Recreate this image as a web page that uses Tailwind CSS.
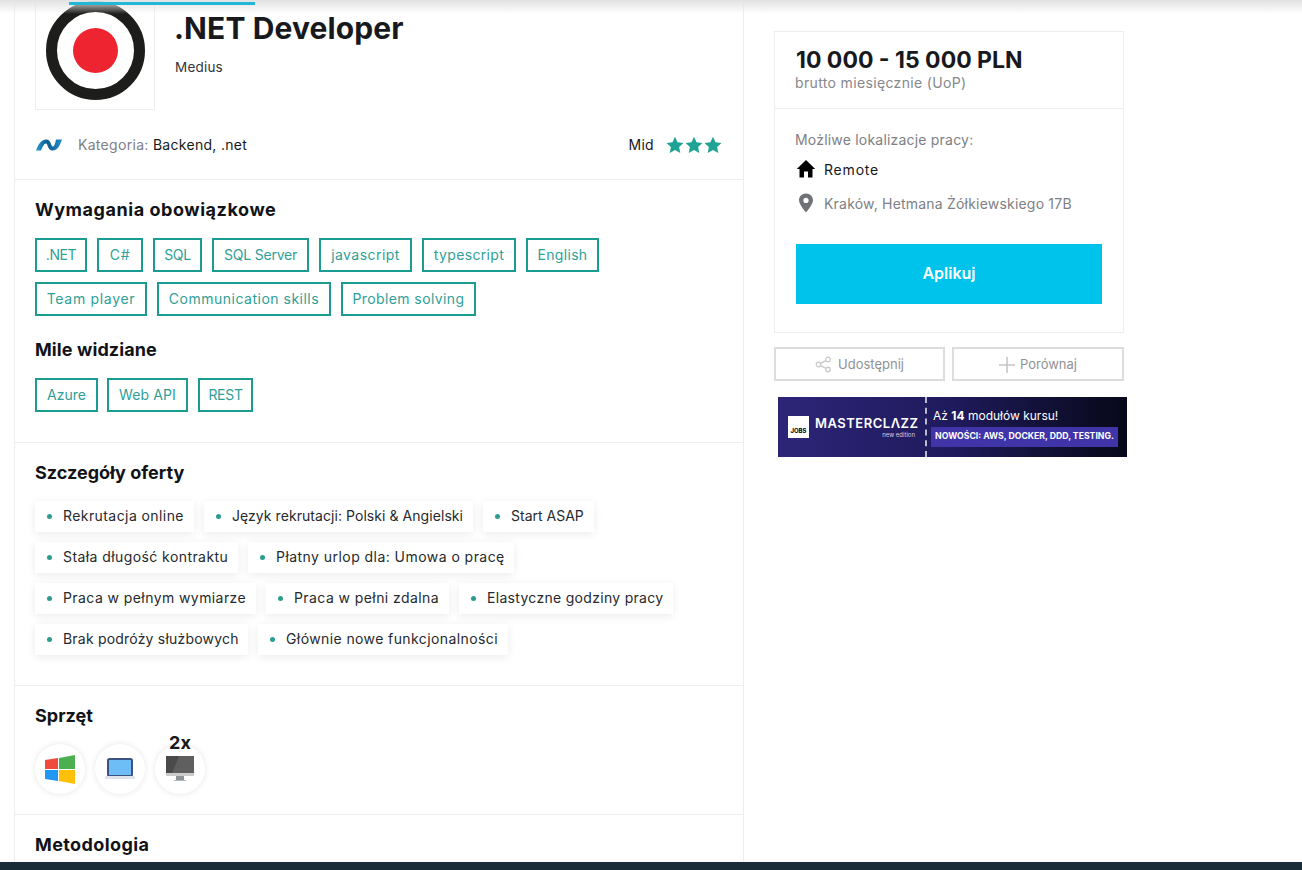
<!DOCTYPE html>
<html lang="pl">
<head>
  <meta charset="UTF-8">
  <title>.NET Developer</title>
  <script src="https://cdn.jsdelivr.net/npm/@tailwindcss/browser@4"></script>
</head>
<body class="bg-white font-['Inter','Liberation_Sans',sans-serif] text-[#17191c]">
<div class="relative h-[870px] w-[1302px] overflow-hidden">

  <!-- top shadow and progress bar -->
  <div class="absolute left-0 top-0 z-10 h-[14px] w-full bg-gradient-to-b from-[#e2e2e2] to-white/0"></div>
  <div class="absolute left-[69px] top-[2px] z-20 h-[3px] w-[186px] bg-[#21b8d8]"></div>

  <div class="flex h-[862px] overflow-hidden pl-[14px]">
    <!-- left column -->
    <div class="h-[900px] w-[730px] shrink-0 border-x border-[#eeeeee]">
      <div class="flex h-[110px] pl-[20px]">
        <div class="flex h-[110px] w-[120px] items-start justify-center border-x border-b border-[#eeeeee]">
          <div class="mt-[1px] flex h-[99px] w-[99px] items-center justify-center rounded-full border-[11px] border-[#1d1d1b] bg-white">
            <div class="h-[45px] w-[45px] rounded-full bg-[#ee2531]"></div>
          </div>
        </div>
        <div class="pl-5">
          <h1 class="-ml-[1px] mt-[9px] text-[30px] leading-[38px] font-bold tracking-[0.1px] text-[#17191c]">.NET Developer</h1>
          <p class="mt-[10px] text-[13.5px] leading-5 tracking-[0.2px] text-[#33363a]">Medius</p>
        </div>
      </div>

      <div class="flex h-[69px] items-center justify-between pl-[21px] pr-[21px]">
        <div class="flex items-center">
          <svg class="h-[12px] w-[26px]" viewBox="0 0 26 12">
            <defs><linearGradient id="dotnet" x1="0" x2="1" y1="0" y2="0"><stop offset="0" stop-color="#2a9ad6"/><stop offset="0.45" stop-color="#0b5a8f"/><stop offset="1" stop-color="#2490cf"/></linearGradient></defs>
            <path fill="url(#dotnet)" d="M0 11.500 C2 6 5 .5 10 .5 C13 .5 14 2 15 5 C15.800 7 16.300 7.500 17 7.500 C18.500 7.500 19.500 3 20 .5 H26 C24.500 5 22 11.500 16.500 11.500 C13.500 11.500 12.500 9 11.500 6.500 C11 5 10.500 4.500 10 4.500 C8 4.500 6.500 8 5 11.500 Z"/>
          </svg>
          <p class="ml-[16px] text-[14px] tracking-[0.3px] text-[#7d8085]">Kategoria: <span class="text-[#17191c]">Backend, .net</span></p>
        </div>
        <div class="flex items-center">
          <span class="mr-[12px] text-[14px] tracking-[0.3px] text-[#17191c]">Mid</span>
          <div class="flex gap-[1px]">
            <svg class="h-[18px] w-[18px]" viewBox="0 0 24 24"><path fill="#1fa394" d="M12 1l3.400 7.300 7.900 1-5.800 5.500 1.500 7.900L12 18.800l-7 3.900 1.500-7.900L.7 9.300l7.900-1z"/></svg>
            <svg class="h-[18px] w-[18px]" viewBox="0 0 24 24"><path fill="#1fa394" d="M12 1l3.400 7.300 7.900 1-5.800 5.500 1.500 7.900L12 18.800l-7 3.900 1.500-7.900L.7 9.300l7.900-1z"/></svg>
            <svg class="h-[18px] w-[18px]" viewBox="0 0 24 24"><path fill="#1fa394" d="M12 1l3.400 7.300 7.900 1-5.800 5.500 1.500 7.900L12 18.800l-7 3.900 1.500-7.900L.7 9.300l7.900-1z"/></svg>
          </div>
        </div>
      </div>

      <!-- requirements -->
      <section class="h-[263px] border-t border-[#eeeeee] pl-[20px] pt-[18px]">
        <h2 class="text-[18px] leading-6 font-bold tracking-[0.55px] text-[#111317]">Wymagania obowiązkowe</h2>
        <div class="mt-[16px] flex w-[580px] flex-wrap gap-[10px] text-[14px] text-[#2f9f97]">
          <span class="flex h-[34px] w-[52px] items-center justify-center border-2 border-[#1a9c92] pb-[2px] tracking-[-0.4px]">.NET</span>
          <span class="flex h-[34px] w-[46px] items-center justify-center border-2 border-[#1a9c92] pb-[2px] tracking-[0.6px]">C#</span>
          <span class="flex h-[34px] w-[49px] items-center justify-center border-2 border-[#1a9c92] pb-[2px] tracking-[-0.3px]">SQL</span>
          <span class="flex h-[34px] w-[97px] items-center justify-center border-2 border-[#1a9c92] pb-[2px] tracking-[-0.2px]">SQL Server</span>
          <span class="flex h-[34px] w-[93px] items-center justify-center border-2 border-[#1a9c92] pb-[2px] tracking-[0.45px]">javascript</span>
          <span class="flex h-[34px] w-[94px] items-center justify-center border-2 border-[#1a9c92] pb-[2px] tracking-[0.35px]">typescript</span>
          <span class="flex h-[34px] w-[73px] items-center justify-center border-2 border-[#1a9c92] pb-[2px] tracking-[0.3px]">English</span>
          <span class="flex h-[34px] w-[112px] items-center justify-center border-2 border-[#1a9c92] pb-[2px] tracking-[0.7px]">Team player</span>
          <span class="flex h-[34px] w-[174px] items-center justify-center border-2 border-[#1a9c92] pb-[2px] tracking-[0.5px]">Communication skills</span>
          <span class="flex h-[34px] w-[135px] items-center justify-center border-2 border-[#1a9c92] pb-[2px] tracking-[0.4px]">Problem solving</span>
        </div>
        <h2 class="mt-[22px] text-[18px] leading-6 font-bold tracking-[0.1px] text-[#111317]">Mile widziane</h2>
        <div class="mt-[16px] flex gap-[10px] text-[14px] text-[#2f9f97]">
          <span class="flex h-[34px] w-[63px] items-center justify-center border-2 border-[#1a9c92] pb-[2px]">Azure</span>
          <span class="-ml-[1px] flex h-[34px] w-[81px] items-center justify-center border-2 border-[#1a9c92] pb-[2px] tracking-[0.1px]">Web API</span>
          <span class="flex h-[34px] w-[55px] items-center justify-center border-2 border-[#1a9c92] pb-[2px] tracking-[-0.3px]">REST</span>
        </div>
      </section>

      <!-- offer details -->
      <section class="h-[243px] border-t border-[#eeeeee] pl-[20px] pt-[18px]">
        <h2 class="text-[18px] leading-6 font-bold text-[#111317]">Szczegóły oferty</h2>
        <div class="mt-[16px] flex w-[660px] flex-wrap gap-[10px] text-[14px] whitespace-nowrap text-[#26292d]">
          <span class="flex h-[31px] w-[159px] items-center bg-white pb-[2px] pl-[12px] tracking-[0.42px] shadow-[0_2px_10px_rgba(0,0,0,0.08)]"><i class="mr-[11px] mt-[2px] h-[5px] w-[5px] rounded-full bg-[#2a9d8f]"></i>Rekrutacja online</span>
          <span class="flex h-[31px] w-[269px] items-center bg-white pb-[2px] pl-[12px] tracking-[0.06px] shadow-[0_2px_10px_rgba(0,0,0,0.08)]"><i class="mr-[11px] mt-[2px] h-[5px] w-[5px] rounded-full bg-[#2a9d8f]"></i>Język rekrutacji: Polski &amp; Angielski</span>
          <span class="flex h-[31px] w-[111px] items-center bg-white pb-[2px] pl-[12px] shadow-[0_2px_10px_rgba(0,0,0,0.08)]"><i class="mr-[11px] mt-[2px] h-[5px] w-[5px] rounded-full bg-[#2a9d8f]"></i>Start ASAP</span>
          <span class="flex h-[31px] w-[203px] items-center bg-white pb-[2px] pl-[12px] tracking-[0.42px] shadow-[0_2px_10px_rgba(0,0,0,0.08)]"><i class="mr-[11px] mt-[2px] h-[5px] w-[5px] rounded-full bg-[#2a9d8f]"></i>Stała długość kontraktu</span>
          <span class="flex h-[31px] w-[266px] items-center bg-white pb-[2px] pl-[12px] tracking-[0.45px] shadow-[0_2px_10px_rgba(0,0,0,0.08)]"><i class="mr-[11px] mt-[2px] h-[5px] w-[5px] rounded-full bg-[#2a9d8f]"></i>Płatny urlop dla: Umowa o pracę</span>
          <span class="flex h-[31px] w-[221px] items-center bg-white pb-[2px] pl-[12px] tracking-[0.42px] shadow-[0_2px_10px_rgba(0,0,0,0.08)]"><i class="mr-[11px] mt-[2px] h-[5px] w-[5px] rounded-full bg-[#2a9d8f]"></i>Praca w pełnym wymiarze</span>
          <span class="flex h-[31px] w-[183px] items-center bg-white pb-[2px] pl-[12px] tracking-[0.42px] shadow-[0_2px_10px_rgba(0,0,0,0.08)]"><i class="mr-[11px] mt-[2px] h-[5px] w-[5px] rounded-full bg-[#2a9d8f]"></i>Praca w pełni zdalna</span>
          <span class="flex h-[31px] w-[214px] items-center bg-white pb-[2px] pl-[12px] tracking-[0.3px] shadow-[0_2px_10px_rgba(0,0,0,0.08)]"><i class="mr-[11px] mt-[2px] h-[5px] w-[5px] rounded-full bg-[#2a9d8f]"></i>Elastyczne godziny pracy</span>
          <span class="flex h-[31px] w-[213px] items-center bg-white pb-[2px] pl-[12px] tracking-[0.2px] shadow-[0_2px_10px_rgba(0,0,0,0.08)]"><i class="mr-[11px] mt-[2px] h-[5px] w-[5px] rounded-full bg-[#2a9d8f]"></i>Brak podróży służbowych</span>
          <span class="flex h-[31px] w-[250px] items-center bg-white pb-[2px] pl-[12px] tracking-[0.4px] shadow-[0_2px_10px_rgba(0,0,0,0.08)]"><i class="mr-[11px] mt-[2px] h-[5px] w-[5px] rounded-full bg-[#2a9d8f]"></i>Głównie nowe funkcjonalności</span>
        </div>
      </section>

      <!-- equipment -->
      <section class="relative h-[129px] border-t border-[#eeeeee] pl-[20px] pt-[18px]">
        <h2 class="text-[18px] leading-6 font-bold text-[#111317]">Sprzęt</h2>
        <div class="mt-[16px] flex gap-[10px]">
          <div class="flex h-[50px] w-[50px] items-center justify-center rounded-full bg-white shadow-[0_0_6px_rgba(0,0,0,0.1)]">
            <svg class="h-[30px] w-[30px]" viewBox="0 0 30 30"><path fill="#f04a3c" d="M0 6l13-2v11H0z"/><path fill="#4caf50" d="M14 4l16-3v14H14z"/><path fill="#2196f3" d="M0 16h13v11L0 25z"/><path fill="#ffc107" d="M14 16h16v14l-16-3z"/></svg>
          </div>
          <div class="flex h-[50px] w-[50px] items-center justify-center rounded-full bg-white shadow-[0_0_6px_rgba(0,0,0,0.1)]">
            <svg class="h-[22px] w-[30px]" viewBox="0 0 30 22"><rect x="3" y="1" width="24" height="17" rx="1.500" fill="#6ebdf7" stroke="#3c5382" stroke-width="2"/><rect x="0" y="18" width="30" height="3" rx="1" fill="#dfe3ea"/></svg>
          </div>
          <div class="relative flex h-[50px] w-[50px] items-center justify-center rounded-full bg-white shadow-[0_0_6px_rgba(0,0,0,0.1)]">
            <span class="absolute left-0 top-[-11px] w-full text-center text-[18px] leading-5 font-bold text-[#17191c]">2x</span>
            <svg class="h-[26px] w-[30px]" viewBox="0 0 30 26"><rect x="1" y="0" width="28" height="17" fill="#4a4a4a"/><path fill="#5f5f5f" d="M14 0h15v17H7z"/><rect x="1" y="17" width="28" height="3" fill="#c9cbcd"/><rect x="11" y="20" width="8" height="4" fill="#8f9396"/><rect x="9" y="24" width="12" height="1" fill="#b5b8ba"/></svg>
          </div>
        </div>
      </section>

      <section class="border-t border-[#eeeeee] pl-[20px] pt-[18px]">
        <h2 class="text-[18px] leading-6 font-bold tracking-[0.4px] text-[#111317]">Metodologia</h2>
      </section>
    </div>

    <!-- right column -->
    <aside class="ml-[30px] w-[353px] shrink-0 pt-[31px]">
      <div class="h-[302px] w-[350px] border border-[#eeeeee]">
        <div class="h-[77px] border-b border-[#eeeeee] pl-[21px] pt-[13px]">
          <p class="text-[23px] leading-[30px] font-bold text-[#17191c]">10 000 - 15 000 PLN</p>
          <p class="-ml-[1px] -mt-[1px] text-[14px] leading-[18px] tracking-[0.35px] text-[#85888c]">brutto miesięcznie (UoP)</p>
        </div>
        <div class="px-[20px] pt-[21px]">
          <p class="text-[14px] leading-5 tracking-[0.2px] text-[#7d8085]">Możliwe lokalizacje pracy:</p>
          <div class="mt-[9px] flex h-5 items-center">
            <svg class="ml-[1px] h-[20px] w-[20px]" viewBox="0 0 20 20"><path fill="#000" d="M10 1 L0.800 10 H3.500 V18.500 H8 V12.500 H12 V18.500 H16.500 V10 H19.200Z"/></svg>
            <span class="ml-[8px] text-[14px] tracking-[0.8px] text-[#17191c]">Remote</span>
          </div>
          <div class="mt-[14px] flex h-5 items-center">
            <svg class="ml-[1px] h-[20px] w-[20px]" viewBox="0 0 20 20"><path fill="#6f7276" fill-rule="evenodd" d="M10 0.500 C5.900 0.500 3 3.600 3 7.300 C3 11.800 10 19.500 10 19.500 C10 19.500 17 11.800 17 7.300 C17 3.600 14.100 0.500 10 0.500Z M10 4.800 A2.600 2.600 0 1 1 10 10 A2.600 2.600 0 1 1 10 4.800Z"/></svg>
            <span class="ml-[8px] text-[14px] tracking-[0.2px] text-[#7d8085]">Kraków, Hetmana Żółkiewskiego 17B</span>
          </div>
          <button class="ml-[1px] mt-[31px] block h-[60px] w-[306px] bg-[#00c3ec] pb-[2px] text-[16px] font-semibold text-white">Aplikuj</button>
        </div>
      </div>

      <div class="mt-[14px] flex w-[350px] justify-between">
        <button class="flex h-[34px] w-[171px] items-center justify-center border-2 border-[#dddddd] pt-[1px] text-[13px] text-[#8f9296]">
          <svg class="mr-[6px] h-[17px] w-[17px]" viewBox="0 0 17 17" fill="none" stroke="#c9c9c9" stroke-width="1.200"><circle cx="3.500" cy="8.500" r="2.300"/><circle cx="13" cy="3.500" r="2.300"/><circle cx="13" cy="13.500" r="2.300"/><path d="M5.500 7.400 L11 4.600 M5.500 9.600 L11 12.400"/></svg>
          Udostępnij
        </button>
        <button class="flex h-[34px] w-[172px] items-center justify-center border-2 border-[#dddddd] pt-[1px] text-[13px] text-[#8f9296]">
          <svg class="mr-[5px] h-[16px] w-[16px]" viewBox="0 0 16 16" stroke="#c4c4c4" stroke-width="1.500"><path d="M8 0 V16 M0 8 H16"/></svg>
          Porównaj
        </button>
      </div>

      <!-- banner -->
      <div class="ml-[4px] mt-[16px] flex h-[60px] w-[349px] items-center bg-gradient-to-r from-[#2d2578] via-[#1f1a5c] to-[#08081a]">
        <div class="ml-[10px] flex h-[22px] w-[21px] items-end justify-center bg-white pb-[4px] text-[6px] leading-[6px] font-bold text-black">JOBS</div>
        <div class="ml-[6px] w-[104px]">
          <p class="text-[13px] leading-[14px] font-semibold tracking-[0.5px] whitespace-nowrap text-white">MASTERCLΛZZ</p>
          <p class="mt-[1px] pr-[4px] text-right text-[6px] leading-[8px] text-[#cfcfe6]">new edition</p>
        </div>
        <div class="ml-[6px] h-[60px] border-l-2 border-dashed border-[#b9b9d0]"></div>
        <div class="ml-[6px]">
          <p class="text-[12px] leading-[16px] text-white">Aż <b>14</b> modułów kursu!</p>
          <p class="-ml-[2px] mt-[3px] flex h-[20px] w-[187px] items-center justify-center whitespace-nowrap bg-[#3f34a8] text-[8.7px] font-bold text-white">NOWOŚCI: AWS, DOCKER, DDD, TESTING.</p>
        </div>
      </div>
    </aside>
  </div>

  <div class="h-[8px] w-full bg-[#182d38]"></div>
</div>
</body>
</html>
